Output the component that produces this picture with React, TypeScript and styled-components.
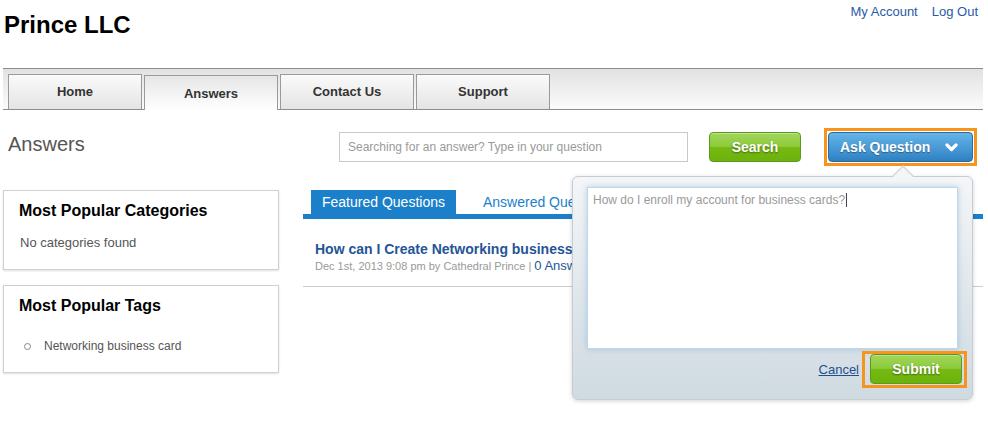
import React from "react";
import styled, { createGlobalStyle } from "styled-components";

const GlobalStyle = createGlobalStyle`
  html, body { margin: 0; padding: 0; background: #fff; }
  body { font-family: "Liberation Sans", Arial, Helvetica, sans-serif; color: #333; }
  * { box-sizing: border-box; }
`;

const Page = styled.div`
  width: 988px;
  min-height: 433px;
  padding: 0 5px 0 3px;
`;

const Header = styled.header`
  height: 68px;
  display: flex;
  justify-content: space-between;
  align-items: flex-start;
`;

const Brand = styled.h1`
  margin: 11px 0 0 1px;
  font-size: 24px;
  line-height: 28px;
  font-weight: bold;
  color: #000;
`;

const TopLinks = styled.nav`
  display: flex;
  gap: 14px;
  margin-top: 4px;
  padding-right: 5px;
`;

const TopLink = styled.a`
  font-size: 13px;
  line-height: 16px;
  color: #2a5aa8;
  text-decoration: none;
`;

const NavBar = styled.nav`
  height: 42px;
  border-top: 1px solid #8c8c8c;
  border-bottom: 1px solid #8c8c8c;
  background: linear-gradient(to bottom, #e2e2e2, #fbfbfb);
  display: flex;
  align-items: flex-end;
  gap: 2px;
  padding-left: 5px;
`;

const NavTab = styled.a<{ $active?: boolean }>`
  width: 134px;
  height: 35px;
  display: flex;
  align-items: center;
  justify-content: center;
  border: 1px solid #9a9a9a;
  border-bottom: none;
  font-size: 13px;
  font-weight: bold;
  color: #333;
  text-decoration: none;
  background: ${(p) =>
    p.$active
      ? "linear-gradient(to bottom, #e6e6e6, #ffffff)"
      : "linear-gradient(to bottom, #fafafa, #e4e4e4)"};
  margin-bottom: ${(p) => (p.$active ? "-1px" : "0")};
  padding-bottom: ${(p) => (p.$active ? "0" : "1px")};
`;

const Toolbar = styled.div`
  display: flex;
  align-items: flex-start;
  margin-top: 18px;
`;

const PageTitle = styled.h2`
  margin: 4px 0 0 5px;
  font-size: 20px;
  line-height: 24px;
  font-weight: normal;
  color: #555;
`;

const SearchGroup = styled.div`
  margin-left: auto;
  margin-right: 6px;
  display: flex;
  align-items: center;
`;

const SearchInput = styled.input`
  width: 349px;
  height: 30px;
  border: 1px solid #c8c8c8;
  padding: 0 8px;
  font-family: inherit;
  font-size: 12px;
  color: #333;
  outline: none;
  &::placeholder { color: #9a9a9a; }
`;

const GreenButton = styled.button<{ $w: number }>`
  width: ${(p) => p.$w}px;
  height: 30px;
  border: 1px solid #5c9a1d;
  border-radius: 4px;
  background: linear-gradient(to bottom, #a2d65c 0%, #8ccb3a 48%, #77b912 52%, #6cb20c 100%);
  color: #fff;
  font-family: inherit;
  font-size: 14px;
  font-weight: bold;
  text-shadow: 0 1px 2px rgba(0, 0, 0, 0.45);
  box-shadow: inset 0 1px 0 rgba(255, 255, 255, 0.3);
  cursor: pointer;
  padding: 0;
`;

const SearchButton = styled(GreenButton)`
  margin-left: 21px;
`;

const Highlight = styled.div<{ $pad: string }>`
  position: relative;
  border: 3px solid #f7941d;
  padding: ${(p) => p.$pad};
  display: flex;
`;

const AskWrap = styled(Highlight)`
  margin-left: 23px;
`;

const AskButton = styled.button`
  width: 145px;
  height: 30px;
  border: 1px solid #2a6ba3;
  border-radius: 4px;
  background: linear-gradient(to bottom, #65b5e8 0%, #4a9bd6 50%, #2f80c3 100%);
  color: #fff;
  font-family: inherit;
  font-size: 14px;
  font-weight: bold;
  text-shadow: 0 1px 1px rgba(0, 0, 0, 0.35);
  display: flex;
  align-items: center;
  justify-content: space-between;
  padding: 0 14px 0 11px;
  cursor: pointer;
`;

const Popup = styled.div`
  position: absolute;
  top: calc(100% + 13px);
  right: 1px;
  width: 401px;
  height: 224px;
  border: 1px solid #c5cdd3;
  border-radius: 6px;
  background: linear-gradient(to bottom, #f4f6f8, #cfdae1);
  box-shadow: 0 1px 4px rgba(0, 0, 0, 0.18);
  padding: 10px 14px 0 14px;
  z-index: 10;
  display: flex;
  flex-direction: column;

  &::before, &::after {
    content: "";
    position: absolute;
    width: 0;
    height: 0;
    border-left: 11px solid transparent;
    border-right: 11px solid transparent;
  }
  &::before {
    top: -12px;
    right: 58px;
    border-bottom: 11px solid #d2d9de;
  }
  &::after {
    top: -10px;
    right: 59px;
    border-left-width: 10px;
    border-right-width: 10px;
    border-bottom: 10px solid #f3f5f7;
  }
`;

const QuestionBox = styled.div`
  width: 371px;
  height: 162px;
  background: #fff;
  border: 1px solid #c4d6e5;
  box-shadow: 0 0 6px rgba(120, 175, 220, 0.55);
  padding: 4px 5px;
  font-size: 12px;
  line-height: 16px;
  color: #9a9a9a;
`;

const Caret = styled.span`
  display: inline-block;
  width: 1px;
  height: 14px;
  background: #444;
  vertical-align: -3px;
  margin-left: 1px;
`;

const PopupFooter = styled.div`
  display: flex;
  justify-content: flex-end;
  align-items: center;
  margin-top: 2px;
  margin-right: -9px;
  gap: 3px;
`;

const CancelLink = styled.a`
  font-size: 13px;
  color: #1f4f8c;
  text-decoration: underline;
`;

const Columns = styled.div`
  display: flex;
  margin-top: 24px;
  gap: 24px;
`;

const Sidebar = styled.aside`
  width: 276px;
  flex-shrink: 0;
  display: flex;
  flex-direction: column;
  gap: 15px;
`;

const Widget = styled.section`
  border: 1px solid #d0d0d0;
  box-shadow: 0 1px 2px rgba(0, 0, 0, 0.12);
  padding: 10px 15px 18px 15px;
`;

const WidgetTitle = styled.h3`
  margin: 0;
  font-size: 16px;
  line-height: 20px;
  font-weight: bold;
  color: #000;
`;

const WidgetText = styled.p`
  margin: 14px 0 0 1px;
  font-size: 13px;
  line-height: 16px;
  color: #555;
`;

const TagList = styled.ul`
  list-style: none;
  margin: 22px 0 0 0;
  padding: 0 0 0 5px;
`;

const TagItem = styled.li`
  font-size: 12px;
  line-height: 16px;
  color: #555;
  display: flex;
  align-items: center;
  &::before {
    content: "";
    width: 5px;
    height: 5px;
    border: 1px solid #888;
    border-radius: 50%;
    margin-right: 13px;
  }
`;

const Main = styled.main`
  flex: 1;
`;

const QTabs = styled.div`
  display: flex;
  gap: 16px;
  padding-left: 8px;
  border-bottom: 5px solid #1b7fca;
`;

const QTab = styled.a<{ $active?: boolean }>`
  height: 24px;
  display: flex;
  align-items: center;
  padding: 0 11px;
  font-size: 14px;
  text-decoration: none;
  color: ${(p) => (p.$active ? "#fff" : "#1b7fca")};
  background: ${(p) => (p.$active ? "#1b7fca" : "transparent")};
`;

const QuestionItem = styled.article`
  margin-top: 21px;
  padding: 0 12px 12px 12px;
  border-bottom: 1px solid #cccccc;
`;

const QuestionTitle = styled.a`
  display: block;
  font-size: 14px;
  line-height: 18px;
  font-weight: bold;
  color: #245596;
  text-decoration: none;
  white-space: nowrap;
`;

const Meta = styled.div`
  font-size: 11px;
  line-height: 16px;
  color: #999;
  white-space: nowrap;
`;

const AnswerCount = styled.a`
  font-size: 13px;
  color: #245596;
  text-decoration: none;
`;

const Chevron = () => (
  <svg width="13" height="11" viewBox="0 0 13 11" aria-hidden="true">
    <path
      d="M2 3 L6.5 7.5 L11 3"
      fill="none"
      stroke="#fff"
      strokeWidth="3.2"
      strokeLinecap="round"
      strokeLinejoin="round"
    />
  </svg>
);

export default function App() {
  return (
    <>
      <GlobalStyle />
      <Page>
        <Header>
          <Brand>Prince LLC</Brand>
          <TopLinks>
            <TopLink href="#">My Account</TopLink>
            <TopLink href="#">Log Out</TopLink>
          </TopLinks>
        </Header>

        <NavBar>
          <NavTab href="#">Home</NavTab>
          <NavTab href="#" $active>Answers</NavTab>
          <NavTab href="#">Contact Us</NavTab>
          <NavTab href="#">Support</NavTab>
        </NavBar>

        <Toolbar>
          <PageTitle>Answers</PageTitle>
          <SearchGroup>
            <SearchInput placeholder="Searching for an answer? Type in your question" />
            <SearchButton $w={92}>Search</SearchButton>
            <AskWrap $pad="1px">
              <AskButton>
                <span>Ask Question</span>
                <Chevron />
              </AskButton>
              <Popup>
                <QuestionBox>
                  How do I enroll my account for business cards?
                  <Caret />
                </QuestionBox>
                <PopupFooter>
                  <CancelLink href="#">Cancel</CancelLink>
                  <Highlight $pad="0 2px 1px 5px">
                    <GreenButton $w={92}>Submit</GreenButton>
                  </Highlight>
                </PopupFooter>
              </Popup>
            </AskWrap>
          </SearchGroup>
        </Toolbar>

        <Columns>
          <Sidebar>
            <Widget>
              <WidgetTitle>Most Popular Categories</WidgetTitle>
              <WidgetText>No categories found</WidgetText>
            </Widget>
            <Widget>
              <WidgetTitle>Most Popular Tags</WidgetTitle>
              <TagList>
                <TagItem>Networking business card</TagItem>
              </TagList>
            </Widget>
          </Sidebar>

          <Main>
            <QTabs>
              <QTab href="#" $active>Featured Questions</QTab>
              <QTab href="#">Answered Questions</QTab>
            </QTabs>
            <QuestionItem>
              <QuestionTitle href="#">How can I Create Networking business card?</QuestionTitle>
              <Meta>
                Dec 1st, 2013 9:08 pm by Cathedral Prince | <AnswerCount href="#">0 Answers</AnswerCount>
              </Meta>
            </QuestionItem>
          </Main>
        </Columns>
      </Page>
    </>
  );
}
